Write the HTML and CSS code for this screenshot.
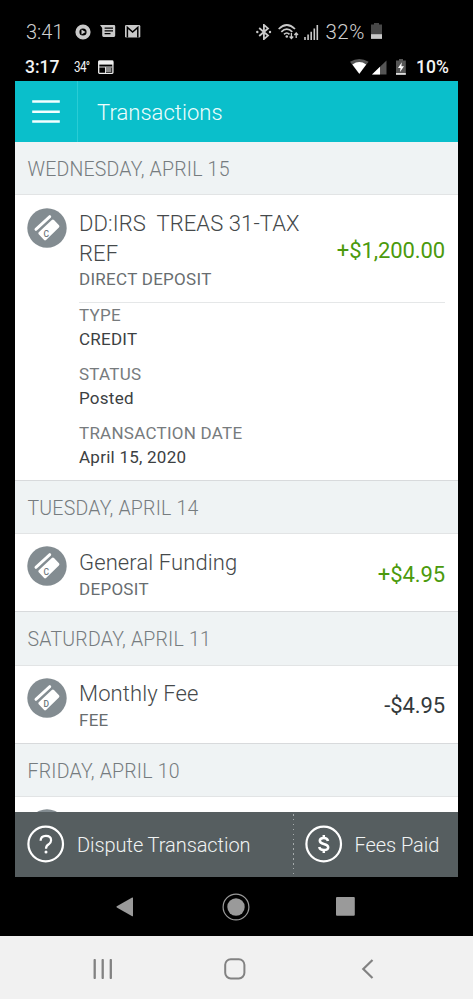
FILE: index.html
```html
<!DOCTYPE html>
<html lang="en">
<head>
<meta charset="utf-8">
<title>Transactions</title>
<link rel="stylesheet" href="styles.css">
</head>
<body>
<svg class="defs" width="0" height="0" aria-hidden="true">
  <symbol id="card" viewBox="0 0 40 40">
    <circle cx="20" cy="20" r="19.7" fill="#838c91"/>
    <path d="M8.9 21.4 22.8 8.6" fill="none" stroke="#fff" stroke-width="2.8" stroke-linecap="round"/>
    <path d="M12 24 24.8 12Q25.9 11 27 12.1L32 17.3Q33 18.4 31.9 19.5L19.1 31.9Q18 32.9 16.9 31.8L11.7 26.2Q10.7 25.1 12 24Z" fill="#fff"/>
  </symbol>
</svg>
<div class="phone">
  <div class="status outer">
    <span class="clock">3:41</span>
    <svg class="i-play" width="16" height="16" viewBox="0 0 16 16"><circle cx="8" cy="8" r="5.6" fill="none" stroke="#c9c9c9" stroke-width="4"/><path d="M6.5 5.5 10.6 8 6.5 10.5Z" fill="#c9c9c9"/></svg>
    <svg class="i-msg" width="16" height="15" viewBox="0 0 16 15"><path d="M0 .9H14Q15.2.9 15.2 2.2V11.6Q15.2 13 14 13H3.6Q2.2 13 2.2 11.6V4Z" fill="#c9c9c9"/><path d="M4.6 4.2H13M4.6 6.9H13M4.6 9.6H10.5" stroke="#000" stroke-width="1.3"/></svg>
    <svg class="i-mail" width="16" height="13" viewBox="0 0 16 13"><rect width="15.3" height="12.5" rx="1.3" fill="#c9c9c9"/><path d="M2.4 12.5V2.4L7.6 7 12.8 2.4V12.5" fill="none" stroke="#000" stroke-width="1.5"/></svg>
    <svg class="i-bt" width="16" height="16" viewBox="0 0 16 16"><path d="M3.2 4 12 11.6 7.9 15.1V.9L12 4.4 3.2 12" fill="none" stroke="#c9c9c9" stroke-width="1.8"/><circle cx="1.3" cy="8" r="1.2" fill="#c9c9c9"/><circle cx="14" cy="8" r="1.2" fill="#c9c9c9"/></svg>
    <svg class="i-wifi" width="21" height="16" viewBox="0 0 21 16"><g fill="none" stroke="#c9c9c9" stroke-width="1.7"><path d="M.7 5Q8.8-3 17 5M3.3 7.8Q8.8 2.3 14.3 7.8M6 10.4Q8.8 7.6 11.5 10.4"/></g><circle cx="8.8" cy="12.5" r="1.3" fill="#c9c9c9"/><path d="M13.4 9V14.2M11.6 12.5 13.4 14.6 15.2 12.5M18.2 14V9.2M16.4 11 18.2 8.9 20 11" fill="none" stroke="#c9c9c9" stroke-width="1.3"/></svg>
    <svg class="i-sig" width="15" height="15" viewBox="0 0 15 15"><path d="M1 12V15M4.1 9.5V15M7.2 6.7V15M10.3 3.5V15M13.3 0V15" stroke="#c9c9c9" stroke-width="1.6"/></svg>
    <span class="pct">32%</span>
    <svg class="i-bat" width="11" height="16" viewBox="0 0 11 16"><path d="M3 0H8V1.6H11V16H0V1.6H3Z" fill="#484848"/><path d="M0 11.2H11V15.8H0Z" fill="#c9c9c9"/></svg>
  </div>
  <div class="status inner">
    <span class="clock">3:17</span>
    <span class="temp">34°</span>
    <svg class="i-cal" width="16" height="14" viewBox="0 0 16 14"><rect x=".7" y="1.2" width="14.2" height="12.1" rx=".8" fill="none" stroke="#eee" stroke-width="1.3"/><path d="M.5 .6H15.2V4.6H.5Z" fill="#eee"/><path d="M1 7H14M7.5 7V13" stroke="#ddd" stroke-width="1"/><path d="M8 7H13.4V12H8Z" fill="#8a8a8a"/></svg>
    <svg class="i-fan" width="19" height="16" viewBox="0 0 19 16"><path d="M0 2.8Q9.3-2.7 18.6 2.8L9.3 15Z" fill="#555"/><path d="M2.4 5.4Q9.3.8 16.2 5.4L9.3 14.8Z" fill="#fff"/></svg>
    <svg class="i-tri" width="15" height="15" viewBox="0 0 15 15"><path d="M14.5.5V14.5H0Z" fill="#555"/><path d="M8 6.7V14.5H0Z" fill="#fff"/></svg>
    <svg class="i-chg" width="10" height="16" viewBox="0 0 10 16"><path d="M3 0H7V1.4H9.8V15.8H0V1.4H3Z" fill="#555"/><path d="M0 14H9.8V15.8H0Z" fill="#ddd"/><path d="M5.8 3.2 2 9H4.5L4 13 8 7.3H5.4Z" fill="#fff"/></svg>
    <span class="pct">10%</span>
  </div>

  <main class="app">
    <header class="bar">
      <div class="menu"><svg width="28" height="24" viewBox="0 0 28 24"><path d="M.2 1.5H27.8M.2 11.7H27.8M.2 21.5H27.8" stroke="#f4ffff" stroke-width="2.4"/></svg></div>
      <h1>Transactions</h1>
    </header>
    <div class="list">
      <h2>WEDNESDAY, APRIL 15</h2>
      <section class="tx open">
        <svg class="icon" width="40" height="40"><use href="#card"/><text x="19.2" y="28.5">C</text></svg>
        <div class="content">
          <div class="summary">
            <div><p class="title">DD:IRS&nbsp; TREAS 31-TAX<br>REF</p><p class="sub">DIRECT DEPOSIT</p></div>
            <span class="amount plus">+$1,200.00</span>
          </div>
          <dl>
            <dt>TYPE</dt><dd>CREDIT</dd>
            <dt>STATUS</dt><dd>Posted</dd>
            <dt>TRANSACTION DATE</dt><dd>April 15, 2020</dd>
          </dl>
        </div>
      </section>
      <h2>TUESDAY, APRIL 14</h2>
      <section class="tx">
        <svg class="icon" width="40" height="40"><use href="#card"/><text x="19.2" y="28.5">C</text></svg>
        <div class="content"><div class="summary">
          <div><p class="title">General Funding</p><p class="sub">DEPOSIT</p></div>
          <span class="amount plus">+$4.95</span>
        </div></div>
      </section>
      <h2>SATURDAY, APRIL 11</h2>
      <section class="tx">
        <svg class="icon" width="40" height="40"><use href="#card"/><text x="19.2" y="28.5">D</text></svg>
        <div class="content"><div class="summary">
          <div><p class="title">Monthly Fee</p><p class="sub">FEE</p></div>
          <span class="amount">-$4.95</span>
        </div></div>
      </section>
      <h2>FRIDAY, APRIL 10</h2>
      <section class="tx cut">
        <svg class="icon" width="40" height="40"><use href="#card"/></svg>
      </section>
    </div>
    <footer class="actions">
      <div class="dispute">
        <svg width="38" height="38" viewBox="0 0 38 38"><circle cx="18.7" cy="19" r="17.3" fill="none" stroke="#fff" stroke-width="2.2"/><path d="M13.6 15.8Q13.6 10.8 18.9 10.8 24.1 10.8 24.1 15.2 24.1 17.5 21.7 19.3 19 21 19 23.8" fill="none" stroke="#fff" stroke-width="2.2"/><circle cx="19" cy="27" r="1.5" fill="#fff"/></svg>
        <span>Dispute Transaction</span>
      </div>
      <div class="fees">
        <svg width="38" height="38" viewBox="0 0 38 38"><circle cx="18.7" cy="19" r="17.3" fill="none" stroke="#fff" stroke-width="2.2"/><path d="M23 15.9Q22.4 13 18.8 13 14.8 13 14.8 15.8 14.8 18 18.8 19 23.2 20.2 23.2 22.3 23.2 25.1 18.8 25.1 14.8 25.1 14.2 22.1M18.8 10V13M18.8 25V28" fill="none" stroke="#fff" stroke-width="2.5"/></svg>
        <span>Fees Paid</span>
      </div>
    </footer>
  </main>

  <nav class="nav dark">
    <svg width="18" height="20" viewBox="0 0 18 20"><path d="M.8 9.3 16.2.5Q17 .2 17 1V18.8Q17 19.6 16.2 19.2L.8 10.4Q0 9.9.8 9.3Z" fill="#9a9a9a"/></svg>
    <svg width="28" height="28" viewBox="0 0 28 28"><circle cx="14" cy="14" r="12.9" fill="none" stroke="#9a9a9a" stroke-width="1.2"/><circle cx="14" cy="14" r="8.7" fill="#9a9a9a"/></svg>
    <svg width="19" height="19" viewBox="0 0 19 19"><rect width="18.8" height="18.8" rx="1" fill="#9a9a9a"/></svg>
  </nav>
  <nav class="nav light">
    <svg width="20" height="20" viewBox="0 0 20 20"><path d="M1.7 1V19M9.7 1V19M17.8 1V19" stroke="#828282" stroke-width="2.3" stroke-linecap="round"/></svg>
    <svg width="22" height="22" viewBox="0 0 22 22"><rect x="1.2" y="1.2" width="19.2" height="19.2" rx="5.6" fill="none" stroke="#828282" stroke-width="2"/></svg>
    <svg width="13" height="20" viewBox="0 0 13 20"><path d="M11.5 1 2.3 10 11.5 19" fill="none" stroke="#828282" stroke-width="2.2"/></svg>
  </nav>
</div>
</body>
</html>
```
FILE: styles.css
```css
* { box-sizing: border-box; margin: 0; padding: 0; }
html, body { width: 473px; height: 999px; overflow: hidden; background: #000; }
body { font-family: Roboto, "Liberation Sans", sans-serif; font-weight: 300; }
svg { display: block; flex: none; }
.defs { position: absolute; }
.phone { display: flex; flex-direction: column; height: 999px; }
span, h1, h2 { white-space: nowrap; }

.status { display: flex; align-items: center; color: #d0d0d0; flex: none; }
.outer { height: 52px; padding: 11px 0 0 26px; font-size: 20px; }
.outer .clock { width: 48.5px; }
.i-msg { margin-left: 9.5px; }
.i-mail { margin-left: 9px; }
.i-bt { margin-left: 115px; }
.i-wifi { margin-left: 6px; }
.i-sig { margin-left: 5px; margin-top: 2px; }
.outer .pct { width: 45.5px; margin-left: 6.5px; font-size: 20.5px; letter-spacing: .5px; }
.i-bat { margin-top: -1px; }
.inner { height: 29px; padding: 1px 0 0 25px; color: #f4f4f4; font-size: 17.5px; font-weight: 500; }
.inner .clock { width: 49px; }
.temp { width: 23px; font-size: 14.5px; font-weight: 400; letter-spacing: -.8px; transform: scaleX(.8); transform-origin: left; }
.i-cal { margin-left: 1px; }
.i-fan { margin-left: 236px; }
.i-tri { margin-left: 3px; }
.i-chg { margin-left: 9px; }
.inner .pct { margin-left: 10px; }

.app { width: 442.5px; height: 796px; margin-left: 15px; display: flex; flex-direction: column; background: #fff; flex: none; }
.bar { height: 61px; display: flex; background: #0abfcb; flex: none; }
.menu { width: 63px; padding: 19px 0 0 17px; border-right: 1px solid #2accd5; }
h1 { padding-left: 19px; color: #effdfd; font-size: 22px; line-height: 63px; font-weight: 300; letter-spacing: .05px; }
.list { height: 670px; overflow: hidden; }
h2 { height: 53.2px; padding-left: 12.5px; background: #eff3f4; border-bottom: 1px solid #e2e4e5; color: #767c7f; font-size: 19.5px; line-height: 56px; font-weight: 300; letter-spacing: .2px; }
.tx { display: flex; height: 78.2px; padding: 12px 12.5px 0 12px; border-bottom: 1.5px solid #d8dadc; }
.open { height: 285.8px; }
.open .icon { margin-top: .5px; }
.cut { border: 0; }
.icon text { font: 500 8.5px Roboto, sans-serif; fill: #6f787d; text-anchor: middle; }
.content { flex: 1; margin-left: 12px; padding-top: 1.9px; }
.summary { display: flex; align-items: center; justify-content: space-between; }
.title { color: #45494b; font-size: 22px; line-height: 29.5px; white-space: nowrap; letter-spacing: .1px; }
.sub { color: #686d6f; font-size: 17px; line-height: 23px; font-weight: 400; letter-spacing: .28px; }
.amount { color: #33393b; font-size: 22px; font-weight: 400; letter-spacing: -.1px; }
.plus { color: #4b9a0c; }
dl { margin-top: 11px; padding-top: 1px; border-top: 1.5px solid #e5e7e8; font-size: 17px; line-height: 23.5px; font-weight: 400; letter-spacing: .25px; }
dt { color: #777b7d; }
dd { color: #3c4042; margin-bottom: 12px; }
dd:last-child { margin-bottom: 0; }

.actions { height: 65px; display: flex; background: #565e60; color: #f0f3f3; font-size: 20px; letter-spacing: -.06px; flex: none; }
.actions > div { display: flex; align-items: center; }
.actions svg { margin-top: -2px; }
.dispute { width: 279px; padding-left: 12px; background: repeating-linear-gradient(#a5abac 0 1.5px, transparent 1.5px 4.9px) right 2px / 1.5px 100% no-repeat; }
.dispute span { margin-left: 12px; }
.fees { padding-left: 11px; }
.fees span { margin-left: 11.5px; }

.nav { display: flex; align-items: center; flex: none; }
.dark { height: 59px; padding-left: 116px; }
.dark svg:nth-child(2) { margin-left: 88px; }
.dark svg:nth-child(3) { margin-left: 86px; }
.light { flex: 1; background: #f1f1f1; padding: 2px 0 0 93px; }
.light svg:nth-child(2) { margin-left: 111px; }
.light svg:nth-child(3) { margin-left: 115px; }
```
